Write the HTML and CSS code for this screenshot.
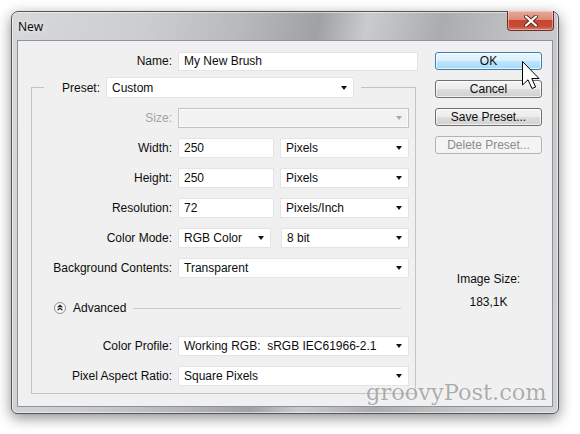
FILE: index.html
```html
<!DOCTYPE html>
<html>
<head>
<meta charset="utf-8">
<title>New</title>
<link rel="stylesheet" href="styles.css">
</head>
<body>
<div class="stage">
  <div class="window">
    <div class="titlebar">
      <span class="title">New</span>
      <div class="close">
        <svg width="16" height="12" viewBox="0 0 16 12">
          <path d="M3 1.5 L13 10.5 M13 1.5 L3 10.5" stroke="#5a2a22" stroke-width="4" stroke-linecap="round"/>
          <path d="M3 1.5 L13 10.5 M13 1.5 L3 10.5" stroke="#ffffff" stroke-width="2.2" stroke-linecap="round"/>
        </svg>
      </div>
    </div>
    <div class="panel">
      <div class="form">
        <div class="row name-row">
          <span class="lbl">Name:</span>
          <div class="field name-field">My New Brush</div>
        </div>
        <fieldset class="group">
          <legend class="preset">
            <span class="plbl">Preset:</span>
            <div class="select preset-select"><span>Custom</span><i class="arrow"></i></div>
          </legend>
          <div class="rows">
            <div class="row">
              <span class="lbl disabled">Size:</span>
              <div class="select wide dis"><span></span><i class="arrow grey"></i></div>
            </div>
            <div class="row">
              <span class="lbl">Width:</span>
              <div class="field num">250</div>
              <div class="select unit"><span>Pixels</span><i class="arrow"></i></div>
            </div>
            <div class="row">
              <span class="lbl">Height:</span>
              <div class="field num">250</div>
              <div class="select unit"><span>Pixels</span><i class="arrow"></i></div>
            </div>
            <div class="row">
              <span class="lbl">Resolution:</span>
              <div class="field num">72</div>
              <div class="select unit"><span>Pixels/Inch</span><i class="arrow"></i></div>
            </div>
            <div class="row">
              <span class="lbl">Color Mode:</span>
              <div class="select mode"><span>RGB Color</span><i class="arrow"></i></div>
              <div class="select bits"><span>8 bit</span><i class="arrow"></i></div>
            </div>
            <div class="row">
              <span class="lbl">Background Contents:</span>
              <div class="select wide"><span>Transparent</span><i class="arrow"></i></div>
            </div>
          </div>
          <div class="advanced">
            <span class="adv-icon">
              <svg width="12" height="12" viewBox="0 0 12 12">
                <circle cx="6" cy="6" r="5.5" fill="#fbfbfb" stroke="#8d8d8d" stroke-width="1"/>
                <path d="M3.6 5.4 L6 3.2 L8.4 5.4 M3.6 8.2 L6 6 L8.4 8.2" fill="none" stroke="#222" stroke-width="1.2"/>
              </svg>
            </span>
            <span class="adv-text">Advanced</span>
            <span class="adv-line"></span>
          </div>
          <div class="rows adv-rows">
            <div class="row">
              <span class="lbl">Color Profile:</span>
              <div class="select wide"><span>Working RGB:&nbsp; sRGB IEC61966-2.1</span><i class="arrow"></i></div>
            </div>
            <div class="row">
              <span class="lbl">Pixel Aspect Ratio:</span>
              <div class="select wide"><span>Square Pixels</span><i class="arrow"></i></div>
            </div>
          </div>
        </fieldset>
      </div>
      <div class="side">
        <div class="btn ok">OK</div>
        <div class="btn">Cancel</div>
        <div class="btn">Save Preset...</div>
        <div class="btn off">Delete Preset...</div>
        <div class="imgsize">
          <div>Image Size:</div>
          <div>183,1K</div>
        </div>
      </div>
    </div>
  </div>
</div>
<svg class="cursor" width="18" height="30" viewBox="0 0 18 30">
  <path d="M0.5 0.5 L0.5 24 L6 18.8 L10 27.5 L13.6 26 L9.8 17.5 L17 17.5 Z" fill="#ffffff" stroke="#000000" stroke-width="1"/>
</svg>
<div class="watermark">groovyPost.com</div>
</body>
</html>
```

FILE: styles.css
```css
* { box-sizing: border-box; }
html, body { margin: 0; padding: 0; background: #ffffff; }
body {
  width: 580px;
  height: 434px;
  overflow: hidden;
  position: relative;
  font-family: "Liberation Sans", Arial, sans-serif;
  font-size: 12px;
  color: #0d0d0d;
}
.stage { padding: 11px 0 0 11px; }
.window {
  width: 548px;
  height: 403px;
  border: 1px solid #50555b;
  border-radius: 7px 7px 6px 6px;
  background: linear-gradient(100deg, #d6d8da 0%, #cbcdcf 22%, #b6b8ba 38%, #9fa1a3 50%, #c9cbcd 58%, #aaacae 70%, #c4c6c8 85%, #d0d2d4 100%);
  box-shadow: 0 4px 14px rgba(0, 0, 0, 0.45), inset 0 0 0 1px rgba(255, 255, 255, 0.55);
  padding: 0 5px 6px 5px;
  display: flex;
  flex-direction: column;
}
.titlebar {
  height: 28px;
  display: flex;
  align-items: center;
  justify-content: space-between;
}
.title {
  font-family: "Noto Sans", "Open Sans", sans-serif;
  font-size: 12px;
  color: #111;
  margin-left: 1px;
  margin-top: 1px;
  text-shadow: 0 0 6px rgba(255, 255, 255, 0.9);
}
.close {
  align-self: flex-start;
  width: 47px;
  height: 20px;
  margin-top: -1px;
  margin-right: -1px;
  border: 1px solid #6b3128;
  border-top: none;
  border-radius: 0 0 4px 4px;
  background: linear-gradient(#e9a99c 0%, #dc8a79 45%, #c8452f 50%, #c54a37 80%, #d77a66 100%);
  box-shadow: inset 0 0 0 1px rgba(255, 220, 210, 0.5);
  display: flex;
  align-items: center;
  justify-content: center;
}
.panel {
  flex: 1;
  border: 1px solid #8d9298;
  background: #f0f0f0;
  display: flex;
  padding-top: 10px;
}
.form { width: 401px; }
.row {
  display: flex;
  align-items: center;
  height: 20px;
}
.lbl {
  text-align: right;
  margin-right: 6px;
  white-space: nowrap;
}
.name-row .lbl { width: 154px; }
.rows .lbl { width: 140px; }
.disabled { color: #a3a3a3; }
.field, .select {
  background: #ffffff;
  border: 1px solid #e4e4e4;
  height: 20px;
  display: flex;
  align-items: center;
  padding: 0 6px 0 5px;
  white-space: nowrap;
}
.name-field { width: 240px; height: 19px; }
.select { justify-content: space-between; padding: 0 6px 0 5px; }
.arrow {
  width: 0;
  height: 0;
  border-left: 3.5px solid transparent;
  border-right: 3.5px solid transparent;
  border-top: 4px solid #111;
}
.arrow.grey { border-top-color: #a8a8a8; }
.dis { background: #f2f2f2; border-color: #c4c4c4; box-shadow: inset 0 0 0 1px #fafafa; }
.group {
  margin: 6px 0 0 13px;
  width: 385px;
  padding: 0 0 7px 0;
  border: 1px solid #c4c4c4;
  min-width: 0;
}
.preset {
  margin-left: 12px;
  padding: 0 7px 0 18px;
  display: flex;
  align-items: center;
  height: 21px;
}
.plbl { margin-right: 6px; }
.preset-select { width: 248px; height: 21px; }
.rows { display: flex; flex-direction: column; gap: 10px; padding-top: 10px; }
.wide { width: 231px; }
.num { width: 96px; margin-right: 6px; }
.unit { width: 129px; }
.mode { width: 93px; margin-right: 10px; }
.bits { width: 128px; }
.advanced {
  display: flex;
  align-items: center;
  height: 20px;
  margin-top: 20px;
  padding-left: 22px;
}
.adv-icon { display: flex; width: 12px; height: 12px; }
.adv-text { margin-left: 7px; }
.adv-line { flex: 1; height: 1px; background: #cbcbcb; margin: 0 14px 0 7px; }
.adv-rows { padding-top: 18px; }
.side {
  width: 107px;
  margin-left: 16px;
  margin-top: 1px;
  display: flex;
  flex-direction: column;
  gap: 10px;
}
.btn {
  height: 18px;
  border: 1px solid #707070;
  border-radius: 3px;
  background: linear-gradient(#f4f4f4 0%, #ececec 48%, #dedede 52%, #d0d0d0 100%);
  box-shadow: inset 0 0 0 1px rgba(255, 255, 255, 0.7);
  display: flex;
  align-items: center;
  justify-content: center;
  color: #0d0d0d;
}
.btn.ok {
  border-color: #3c7fb1;
  background: linear-gradient(#eaf6fd 0%, #d9f0fc 48%, #bee6fd 52%, #a7d9f5 100%);
}
.btn.off {
  border-color: #b1b5b8;
  background: #f4f4f4;
  color: #8c8c8c;
  box-shadow: none;
}
.imgsize {
  margin-top: 104px;
  text-align: center;
  line-height: 23px;
}
.cursor {
  position: absolute;
  left: 522px;
  top: 61px;
}
.watermark {
  position: absolute;
  left: 366px;
  top: 380px;
  font-family: "DejaVu Serif", "Liberation Serif", serif;
  font-size: 22.5px;
  line-height: 24px;
  color: rgba(120, 120, 120, 0.6);
  text-shadow: 0 0 2px rgba(255, 255, 255, 0.8);
}
```
